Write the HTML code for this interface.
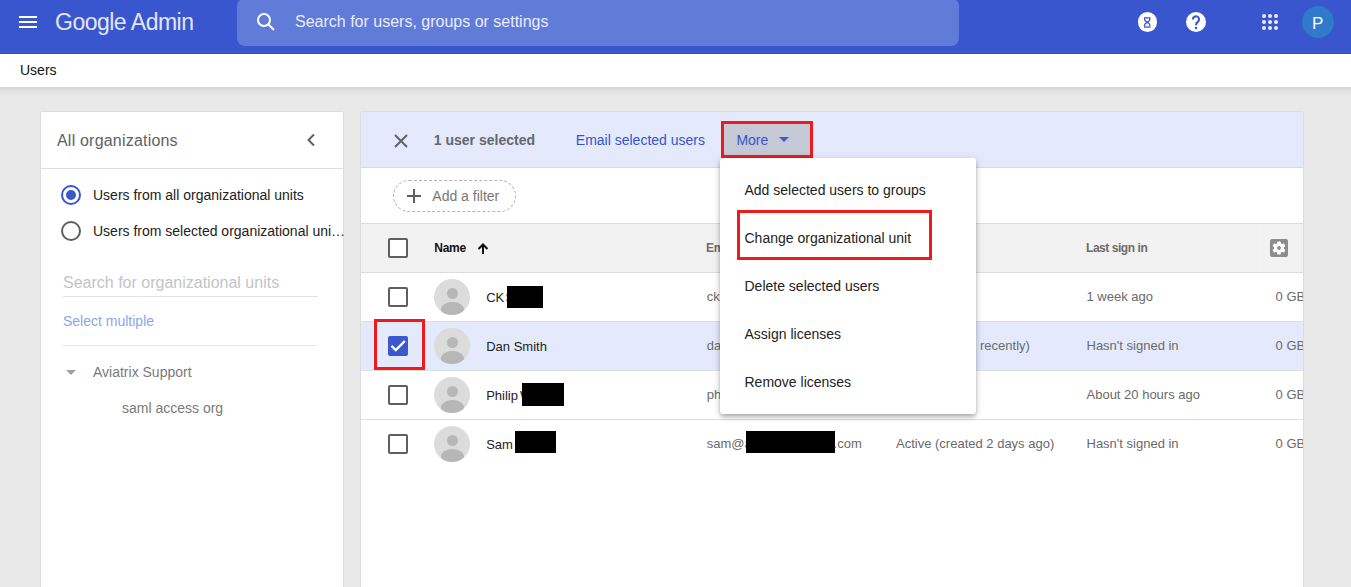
<!DOCTYPE html>
<html><head><meta charset="utf-8">
<style>
*{margin:0;padding:0;box-sizing:border-box}
html,body{width:1351px;height:587px;overflow:hidden;background:#e9e9e9;font-family:"Liberation Sans",sans-serif;position:relative}
.a{position:absolute}
.t{position:absolute;white-space:nowrap;line-height:1}
#hdr{left:0;top:0;width:1351px;height:54px;background:#3a56cf;box-shadow:inset 0 -1px 0 #3450c9}
#search{left:237px;top:-2px;width:722px;height:48px;border-radius:8px;background:#617bd9}
#sub{left:0;top:54px;width:1351px;height:33px;background:#fff}
#subsh{left:0;top:87px;width:1351px;height:9px;background:linear-gradient(rgba(0,0,0,.085),rgba(0,0,0,.035) 40%,rgba(0,0,0,0))}
#lp{left:40px;top:111px;width:304px;height:490px;background:#fff;border:1px solid #dcdcdc;border-radius:2px}
#mp{left:360px;top:111px;width:944px;height:490px;background:#fff;border:1px solid #dcdcdc;border-radius:2px;overflow:hidden}
.cb{position:absolute;width:20px;height:20px;border:2px solid #5f5f5f;border-radius:2px;background:#fff}
.av{position:absolute;width:36px;height:36px;border-radius:50%;background:#dcdcdc;overflow:hidden}
.av:before{content:"";position:absolute;left:12.5px;top:9px;width:11px;height:11px;border-radius:50%;background:#b7b7b7}
.av:after{content:"";position:absolute;left:6.5px;top:23px;width:23px;height:15px;border-radius:50%;background:#b7b7b7}
.row{position:absolute;left:0;width:944px;height:49px;border-bottom:1px solid #e0e0e0}
.cell{position:absolute;white-space:nowrap;line-height:1;font-size:13px;color:#666}
.blk{position:absolute;background:#000}
.mi{position:absolute;left:24px;font-size:14px;color:#222;white-space:nowrap;line-height:1}
</style></head>
<body>
<!-- Header -->
<div id="hdr" class="a">
  <div class="a" style="left:19px;top:16px;width:18px;height:2px;background:#fff"></div>
  <div class="a" style="left:19px;top:21px;width:18px;height:2px;background:#fff"></div>
  <div class="a" style="left:19px;top:26px;width:18px;height:2px;background:#fff"></div>
  <div class="t" style="left:55px;top:10.5px;font-size:23px;letter-spacing:-0.5px;color:#e2e6f7">Google Admin</div>
  <div id="search" class="a">
    <svg class="a" style="left:18px;top:13px" width="22" height="22" viewBox="0 0 22 22"><circle cx="9" cy="9" r="6" fill="none" stroke="#fff" stroke-width="2"/><line x1="13.5" y1="13.5" x2="19" y2="19" stroke="#fff" stroke-width="2"/></svg>
    <div class="t" style="left:58px;top:16px;font-size:16px;color:#e9ecf9">Search for users, groups or settings</div>
  </div>
  <div class="a" style="left:1137.6px;top:12.2px;width:19.4px;height:19.4px;border-radius:50%;background:#fff"></div>
  <svg class="a" style="left:1141px;top:16px" width="12" height="12" viewBox="0 0 12 12"><path d="M3.6 1.8H8.8V3.6Q8.8 5 6.2 6.3Q8.8 7.6 8.8 9V11.2H3.6V9Q3.6 7.6 6.2 6.3Q3.6 5 3.6 3.6Z" fill="none" stroke="#3a56cf" stroke-width="1.3"/><rect x="3.6" y="9.9" width="5.2" height="1.3" fill="#8d9de3"/></svg>
  <div class="a" style="left:1186px;top:12px;width:20px;height:20px;border-radius:50%;background:#fff"></div>
  <svg class="a" style="left:1186px;top:12px" width="20" height="20" viewBox="0 0 20 20"><path d="M6.9 7.4A3.1 3.1 0 1 1 11.8 9.9C10.6 10.8 10 11.4 10 13.2" fill="none" stroke="#3a56cf" stroke-width="2.1"/><rect x="8.9" y="14.9" width="2.2" height="2.2" fill="#3a56cf"/></svg>
  <svg class="a" style="left:1262px;top:14px" width="16" height="16" viewBox="0 0 16 16" fill="#e8ecfa"><circle cx="2" cy="2" r="2"/><circle cx="8" cy="2" r="2"/><circle cx="14" cy="2" r="2"/><circle cx="2" cy="8" r="2"/><circle cx="8" cy="8" r="2"/><circle cx="14" cy="8" r="2"/><circle cx="2" cy="14" r="2"/><circle cx="8" cy="14" r="2"/><circle cx="14" cy="14" r="2"/></svg>
  <div class="a" style="left:1302px;top:6px;width:32px;height:32px;border-radius:50%;background:#2f7acb"></div>
  <div class="t" style="left:1312px;top:15px;font-size:17px;color:#fff">P</div>
</div>
<div id="subsh" class="a"></div>
<div id="sub" class="a"><div class="t" style="left:20px;top:9px;font-size:14px;color:#111">Users</div></div>

<!-- Left panel -->
<div id="lp" class="a">
<div class="t" style="left:16.0px;top:21.3px;font-size:16px;letter-spacing:0.2px;color:#616161;">All organizations</div>
<svg class="a" style="left:264px;top:21px" width="12" height="14" viewBox="0 0 12 14"><path d="M9 1.5 3.5 7 9 12.5" fill="none" stroke="#616161" stroke-width="2"/></svg>
<div class="a" style="left:0;top:56px;width:302px;height:1px;background:#dedede"></div>
<svg class="a" style="left:19px;top:72px" width="22" height="22" viewBox="0 0 22 22"><circle cx="11" cy="11" r="9" fill="none" stroke="#3b57d0" stroke-width="2"/><circle cx="11" cy="11" r="5" fill="#3b57d0"/></svg>
<div class="t" style="left:52.0px;top:76.3px;font-size:14px;color:#222;">Users from all organizational units</div>
<svg class="a" style="left:19px;top:108.4px" width="22" height="22" viewBox="0 0 22 22"><circle cx="11" cy="11" r="9" fill="none" stroke="#5f5f5f" stroke-width="2"/></svg>
<div class="t" style="left:52.0px;top:112.3px;font-size:14px;color:#222;">Users from selected organizational uni…</div>
<div class="t" style="left:22.0px;top:162.5px;font-size:16px;color:#c4c4c4;">Search for organizational units</div>
<div class="a" style="left:22px;top:184px;width:255px;height:1px;background:#e2e2e2"></div>
<div class="t" style="left:22.0px;top:202.0px;font-size:14px;color:#8ba5ec;">Select multiple</div>
<div class="a" style="left:22px;top:233px;width:254px;height:1px;background:#e6e6e6"></div>
<svg class="a" style="left:25px;top:258px" width="10" height="5" viewBox="0 0 10 5"><path d="M0 0h10L5 5z" fill="#a0a0a0"/></svg>
<div class="t" style="left:52.0px;top:253.0px;font-size:14px;color:#7a7a7a;">Aviatrix Support</div>
<div class="t" style="left:81.0px;top:288.7px;font-size:14px;color:#7a7a7a;">saml access org</div>
</div>

<!-- Main panel -->
<div id="mp" class="a">
<div class="a" style="left:0;top:0;width:942px;height:56px;background:#e4eafc;border-bottom:1px solid #d6dae6"></div>
<svg class="a" style="left:33px;top:21.5px" width="14" height="14" viewBox="0 0 14 14"><path d="M1 1 13 13M13 1 1 13" stroke="#5f6368" stroke-width="2"/></svg>
<div class="t" style="left:72.8px;top:21.2px;font-size:14px;font-weight:bold;color:#64676c;">1 user selected</div>
<div class="t" style="left:214.8px;top:20.6px;font-size:14px;color:#3554cc;">Email selected users</div>
<div class="a" style="left:360px;top:8.599999999999994px;width:92px;height:37.5px;background:#c5c9d6;border:3px solid #f01a1a"></div>
<div class="t" style="left:375.4px;top:21.1px;font-size:14px;color:#3554cc;">More</div>
<svg class="a" style="left:417.8px;top:25px" width="10" height="5" viewBox="0 0 10 5"><path d="M0 0h10L5 5z" fill="#3b5bd6"/></svg>
<div class="a" style="left:0;top:111px;width:942px;height:50px;background:#f2f2f2;border-top:1px solid #dcdcdc;border-bottom:1px solid #dcdcdc"></div>
<div class="a" style="left:32px;top:68px;width:123px;height:32px;border:1px dashed #b3b3b3;border-radius:16px"></div>
<svg class="a" style="left:46px;top:77px" width="14" height="14" viewBox="0 0 14 14"><path d="M7 0v14M0 7h14" stroke="#5f5f5f" stroke-width="2"/></svg>
<div class="t" style="left:71.3px;top:77.4px;font-size:14px;color:#777;">Add a filter</div>
<div class="cb" style="left:27px;top:126px"></div>
<div class="t" style="left:73.3px;top:130.0px;font-size:12px;color:#111;font-weight:bold;letter-spacing:-0.3px">Name</div>
<svg class="a" style="left:116px;top:130.5px" width="12" height="11" viewBox="0 0 12 11"><path d="M6 11V1.5M1.5 6 6 1.5 10.5 6" fill="none" stroke="#111" stroke-width="2"/></svg>
<div class="t" style="left:345.0px;top:130.0px;font-size:12px;color:#6c6c6c;font-weight:bold;letter-spacing:-0.3px">Email</div>
<div class="t" style="left:725.0px;top:130.0px;font-size:12px;color:#6c6c6c;font-weight:bold;letter-spacing:-0.45px">Last sign in</div>
<div class="a" style="left:895px;top:112px;width:1px;height:48px;background:#f0f0f0"></div>
<svg class="a" style="left:909px;top:127px" width="18" height="18" viewBox="0 0 18 18"><rect width="18" height="18" rx="2" fill="#8c8c8c"/><g transform="translate(9 9)" fill="#fff"><circle r="5"/><g id="tooth"><rect x="-1.7" y="-6.6" width="3.4" height="3" rx=".6"/></g><use href="#tooth" transform="rotate(60)"/><use href="#tooth" transform="rotate(120)"/><use href="#tooth" transform="rotate(180)"/><use href="#tooth" transform="rotate(240)"/><use href="#tooth" transform="rotate(300)"/></g><circle cx="9" cy="9" r="1.9" fill="#8c8c8c"/></svg>
<div class="a" style="left:0;top:161px;width:942px;height:49px;background:#fff;border-bottom:1px solid #dedede"></div>
<div class="cb" style="left:27px;top:175px"></div>
<div class="av" style="left:73px;top:167px"></div>
<div class="t" style="left:125.2px;top:179.0px;font-size:13px;color:#222;">CK</div><div class="t" style="left:144.5px;top:179.0px;font-size:13px;color:#222;">S</div>
<div class="blk" style="left:146.4px;top:173.6px;width:36px;height:22.5px"></div>
<div class="t" style="left:345.7px;top:178.0px;font-size:13px;color:#6a6a6a;">ck</div>
<div class="t" style="left:535.0px;top:178.0px;font-size:13px;color:#6a6a6a;">Active</div>
<div class="t" style="left:725.5px;top:178.0px;font-size:13px;color:#6a6a6a;">1 week ago</div>
<div class="t" style="left:914.6px;top:178.0px;font-size:13px;color:#6a6a6a;">0 GB</div>
<div class="a" style="left:0;top:210px;width:942px;height:49px;background:#e4eafc;border-bottom:1px solid #dedede"></div>
<svg class="a" style="left:27px;top:224px" width="20" height="20" viewBox="0 0 20 20"><rect width="20" height="20" rx="2" fill="#3b57d0"/><path d="M3.4 9.9 7.8 14.1 16.8 5" fill="none" stroke="#fff" stroke-width="2.4"/></svg>
<div class="av" style="left:73px;top:216px"></div>
<div class="t" style="left:125.2px;top:228.0px;font-size:13px;color:#222;">Dan Smith</div>
<div class="t" style="left:345.7px;top:227.0px;font-size:13px;color:#6a6a6a;">dan</div>
<div class="t" style="left:619.0px;top:227.0px;font-size:13px;color:#6a6a6a;">recently)</div>
<div class="t" style="left:725.5px;top:227.0px;font-size:13px;color:#6a6a6a;">Hasn't signed in</div>
<div class="t" style="left:914.6px;top:227.0px;font-size:13px;color:#6a6a6a;">0 GB</div>
<div class="a" style="left:0;top:259px;width:942px;height:49px;background:#fff;border-bottom:1px solid #dedede"></div>
<div class="cb" style="left:27px;top:273px"></div>
<div class="av" style="left:73px;top:265px"></div>
<div class="t" style="left:125.2px;top:277.0px;font-size:13px;color:#222;">Philip</div><div class="t" style="left:159px;top:277.0px;font-size:13px;color:#222;">W</div>
<div class="blk" style="left:161.4px;top:271.2px;width:41.3px;height:23px"></div>
<div class="t" style="left:345.7px;top:276.0px;font-size:13px;color:#6a6a6a;">ph</div>
<div class="t" style="left:535.0px;top:276.0px;font-size:13px;color:#6a6a6a;">Active</div>
<div class="t" style="left:725.5px;top:276.0px;font-size:13px;color:#6a6a6a;">About 20 hours ago</div>
<div class="t" style="left:914.6px;top:276.0px;font-size:13px;color:#6a6a6a;">0 GB</div>
<div class="a" style="left:0;top:308px;width:942px;height:49px;background:#fff"></div>
<div class="cb" style="left:27px;top:322px"></div>
<div class="av" style="left:73px;top:314px"></div>
<div class="t" style="left:125.2px;top:326.0px;font-size:13px;color:#222;">Sam</div>
<div class="blk" style="left:153.5px;top:318.5px;width:41px;height:22.7px"></div>
<div class="t" style="left:345.7px;top:325.0px;font-size:13px;color:#6a6a6a;">sam@a</div>
<div class="t" style="left:535.0px;top:325.0px;font-size:13px;color:#6a6a6a;">Active (created 2 days ago)</div>
<div class="t" style="left:725.5px;top:325.0px;font-size:13px;color:#6a6a6a;">Hasn't signed in</div>
<div class="t" style="left:914.6px;top:325.0px;font-size:13px;color:#6a6a6a;">0 GB</div>
<div class="blk" style="left:384.6px;top:318.6px;width:89.7px;height:22.6px"></div>
<div class="t" style="left:472.6px;top:325.0px;font-size:13px;color:#6a6a6a;">.com</div>
</div>
<div id="menu" class="a" style="left:720px;top:158px;width:256px;height:256px;background:#fff;border-radius:3px;box-shadow:0 2px 4px -1px rgba(0,0,0,.2),0 4px 5px 0 rgba(0,0,0,.14),0 1px 10px 0 rgba(0,0,0,.12)">
<div class="t" style="left:24.5px;top:25.1px;font-size:14px;color:#222;">Add selected users to groups</div>
<div class="t" style="left:24.5px;top:73.1px;font-size:14px;color:#222;">Change organizational unit</div>
<div class="t" style="left:24.5px;top:121.1px;font-size:14px;color:#222;">Delete selected users</div>
<div class="t" style="left:24.5px;top:169.1px;font-size:14px;color:#222;">Assign licenses</div>
<div class="t" style="left:24.5px;top:217.1px;font-size:14px;color:#222;">Remove licenses</div>
<div class="a" style="left:16.8px;top:51.9px;width:195.3px;height:50.1px;border:3px solid #f01a1a"></div>
</div>
<div class="a" style="left:374px;top:319px;width:51px;height:51px;border:3px solid #f01a1a"></div>

</body></html>
